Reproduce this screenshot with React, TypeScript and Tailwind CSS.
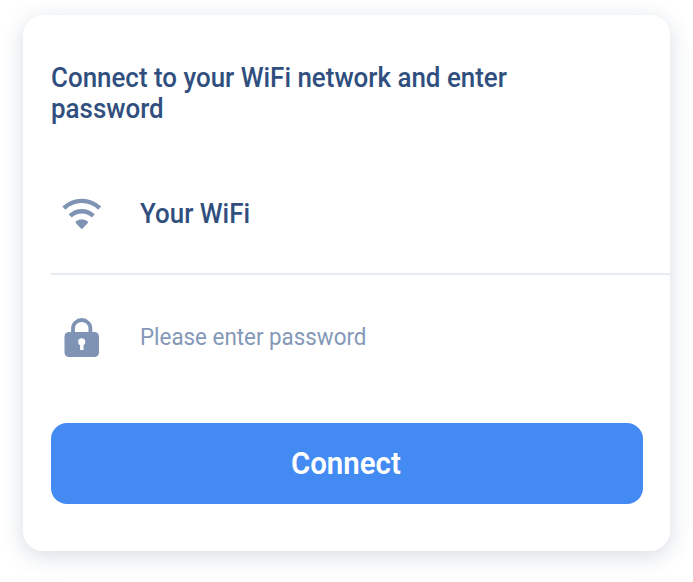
import React from "react";

function WifiIcon() {
  return (
    <svg width="42" height="34" viewBox="0 0 42 34" fill="none" stroke="#7f94b4" strokeWidth="4.4" strokeLinejoin="round">
      <path d="M2.8 11.2C13 1.4 28.5 1.4 38.7 11.2" />
      <path d="M9.2 18.9C16 12.6 25.5 12.6 32.3 18.9" />
      <path d="M16.1 25.2Q20.8 22.4 25.5 25.2L20.8 30.2Z" fill="#7f94b4" strokeWidth="3" />
    </svg>
  );
}

function LockIcon() {
  return (
    <svg width="36" height="40" viewBox="0 0 36 40" fill="none">
      <path d="M9 17V10.5a8.7 8.5 0 0 1 17.4 0V17" stroke="#7f94b4" strokeWidth="3.8" />
      <rect x="0.5" y="14" width="34.5" height="25" rx="4.5" fill="#7f94b4" />
      <circle cx="17.7" cy="23.8" r="3.6" fill="white" />
      <path d="M16.1 25h3.4v7h-3.4z" fill="white" />
    </svg>
  );
}

export default function App() {
  return (
    <div className="h-[582px] w-[693px] overflow-hidden bg-white pt-[15px] pl-[23px] font-['Roboto',sans-serif] text-[#304f7e]">
      <main className="h-[536px] w-[647px] rounded-[20px] bg-white pl-[28px] pt-[48px] shadow-[0_5px_22px_rgba(53,79,115,0.2)]">
        <h1 className="h-[92px] origin-left scale-x-[0.96] text-[27px] leading-[31px] font-medium">
          Connect to your WiFi network and enter<br />password
        </h1>
        <div className="flex h-[120px] items-center border-b-2 border-[#e6ebf2]">
          <div className="flex w-[89px] pl-[10px]"><WifiIcon /></div>
          <span className="origin-left scale-x-[0.96] text-[27px] font-medium">Your WiFi</span>
        </div>
        <div className="flex h-[126px] items-center">
          <div className="flex w-[89px] pl-[13px]"><LockIcon /></div>
          <span className="-mt-0.5 origin-left scale-x-[0.913] text-[24.5px] text-[#8498b8]">Please enter password</span>
        </div>
        <button className="mt-[22px] flex h-[81px] w-[592px] items-center justify-center rounded-[16px] bg-[#438af3] text-[31px] font-semibold text-white">
          <span className="mt-0.5 -ml-0.5 scale-x-[0.95]">Connect</span>
        </button>
      </main>
    </div>
  );
}
